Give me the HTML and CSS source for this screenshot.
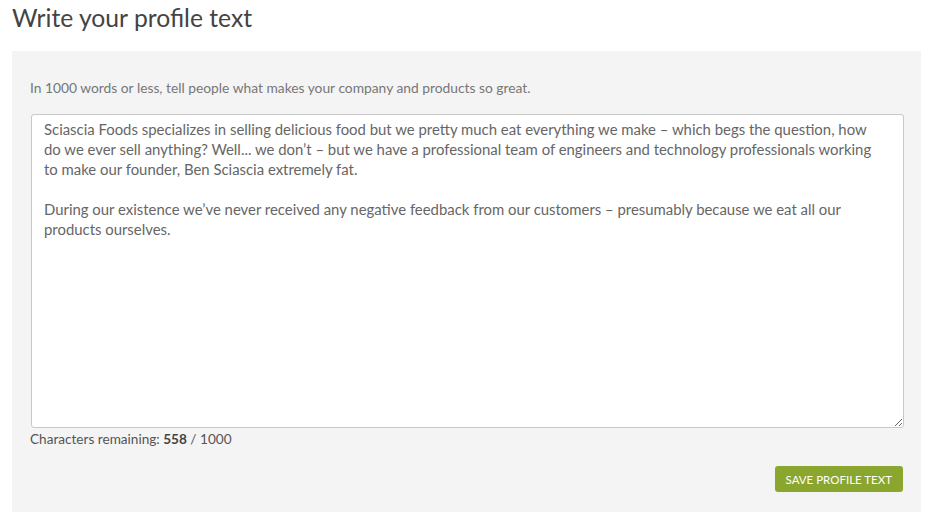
FILE: index.html
```html
<!DOCTYPE html>
<html lang="en">
<head>
    <meta charset="UTF-8">
    <meta name="viewport" content="width=device-width, initial-scale=1.0">
    <title>Write your profile text</title>
    <link rel="stylesheet" href="styles.css">
</head>
<body>
    <h1 class="page-title">Write your profile text</h1>

    <form class="profile-panel">
        <p class="hint">In 1000 words or less, tell people what makes your company and products so great.</p>

        <textarea class="profile-text" id="profileText" name="profileText">Sciascia Foods specializes in selling delicious food but we pretty much eat everything we make – which begs the question, how do we ever sell anything? Well... we don’t – but we have a professional team of engineers and technology professionals working to make our founder, Ben Sciascia extremely fat.

During our existence we’ve never received any negative feedback from our customers – presumably because we eat all our products ourselves.</textarea>

        <div class="counter">Characters remaining: <strong>558</strong> / 1000</div>

        <div class="actions">
            <button type="button" class="btn-save">SAVE PROFILE TEXT</button>
        </div>
    </form>
</body>
</html>
```

FILE: styles.css
```css
* {
    margin: 0;
    padding: 0;
    box-sizing: border-box;
}

body {
    font-family: Lato, 'Open Sans', sans-serif;
    color: #555;
    background: #fff;
    padding: 0 16px 12px 12px;
}

.page-title {
    font-weight: 400;
    font-size: 24.7px;
    color: #444;
    line-height: 34px;
    padding-top: 1px;
    margin-bottom: 16px;
}

.profile-panel {
    background: #f4f4f4;
    padding: 28px 18px 20px 18px;
}

.hint {
    font-size: 13.8px;
    color: #777;
    line-height: 18px;
    margin-bottom: 17px;
}

.profile-text {
    display: block;
    width: 100%;
    height: 314px;
    margin-left: 1px;
    padding: 4px 28px 4px 12px;
    border: 1px solid #c8c8c8;
    border-radius: 3px;
    background: #fff;
    font-family: inherit;
    font-size: 14.9px;
    line-height: 20px;
    color: #666;
    resize: vertical;
}

.counter {
    font-size: 13.6px;
    color: #555;
    line-height: 18px;
    margin-top: 2px;
}

.counter strong {
    color: #444;
}

.actions {
    display: flex;
    justify-content: flex-end;
    margin-top: 18px;
}

.btn-save {
    background: #8aa62e;
    color: #fff;
    border: none;
    border-radius: 3px;
    font-family: inherit;
    font-size: 11.5px;
    height: 26px;
    padding: 0 11px;
    cursor: pointer;
}
```
